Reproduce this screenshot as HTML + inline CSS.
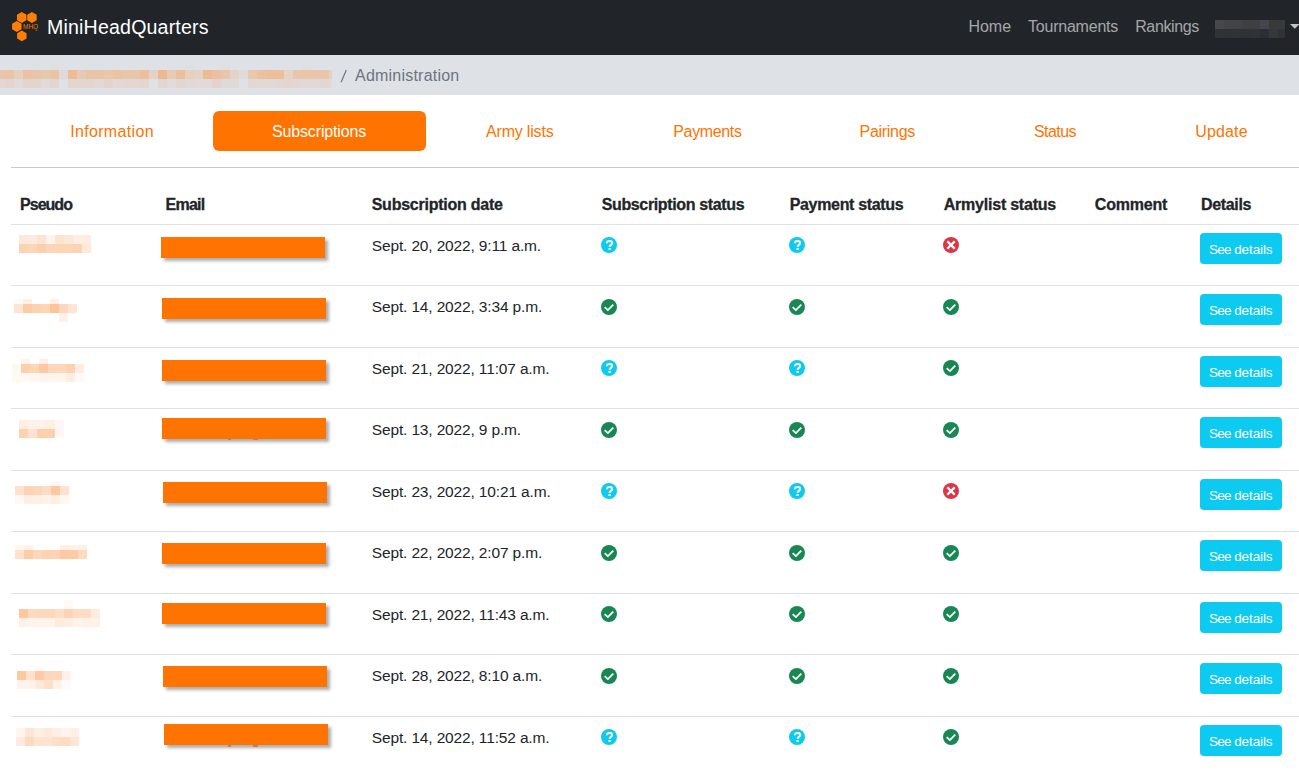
<!DOCTYPE html>
<html><head><meta charset="utf-8"><style>
*{box-sizing:border-box;margin:0;padding:0}
html,body{width:1299px;height:772px;overflow:hidden;background:#fff;font-family:"Liberation Sans",sans-serif;color:#212529}
.abs{position:absolute;white-space:nowrap}
.nav{position:absolute;left:0;top:0;width:1299px;height:55px;background:#212529}
.brand{position:absolute;left:47px;top:15px;font-size:19.6px;line-height:24px;color:#fff;letter-spacing:0.1px}
.nl{position:absolute;top:17.2px;font-size:16px;line-height:20px;color:rgba(255,255,255,.6)}
.bc{position:absolute;left:0;top:55px;width:1299px;height:40px;background:#dee1e6}
.bct{position:absolute;top:66px;font-size:16px;line-height:20px;color:#6c757d}
.tab{position:absolute;top:122px;font-size:16px;line-height:20px;color:#ff7300}
.pill{position:absolute;left:213px;top:111px;width:213px;height:40px;background:#ff7300;border-radius:6px}
.tabline{position:absolute;left:11px;top:167px;width:1288px;height:1px;background:#c8c9ca}
.th{position:absolute;top:195px;font-size:16px;line-height:20px;font-weight:bold;color:#212529;-webkit-text-stroke:0.3px #212529}
.rowline{position:absolute;left:11px;width:1288px;height:1px;background:#dee2e6}
.em{position:absolute;width:164px;height:21px;background:#ff7300;box-shadow:3px 3px 3px rgba(20,30,40,.36)}
.pb{position:absolute;width:9px}
.date{position:absolute;left:371.8px;font-size:15.5px;line-height:20px;letter-spacing:-0.15px;color:#212529;white-space:nowrap}
.ic{position:absolute}
.btn{position:absolute;left:1200px;width:82px;height:31px;background:#0dcaf0;border-radius:4px}
.btn span{position:absolute;top:7.6px;font-size:13.5px;line-height:18px;color:#fff;white-space:nowrap}
</style></head><body>
<div class="nav">
<svg style="position:absolute;left:0;top:0" width="45" height="50" viewBox="0 0 45 50"><g fill="#ff8000"><path d="M21.70 12.05 L26.42 14.78 L26.42 20.23 L21.70 22.95 L16.98 20.23 L16.98 14.77 Z"/><path d="M31.95 12.05 L36.67 14.78 L36.67 20.23 L31.95 22.95 L27.23 20.23 L27.23 14.77 Z"/><path d="M16.80 21.05 L21.52 23.77 L21.52 29.23 L16.80 31.95 L12.08 29.23 L12.08 23.77 Z"/><path d="M21.85 30.45 L26.57 33.17 L26.57 38.62 L21.85 41.35 L17.13 38.62 L17.13 33.17 Z"/></g>
<text x="23" y="29.3" font-family="Liberation Sans" font-size="7" fill="#f07800" textLength="15.2" lengthAdjust="spacingAndGlyphs">MHQ</text></svg>
<div class="brand" style="letter-spacing:0.17px">MiniHeadQuarters</div>
<div class="nl" style="left:968.4px;letter-spacing:0px">Home</div>
<div class="nl" style="left:1028px;letter-spacing:-0.22px">Tournaments</div>
<div class="nl" style="left:1135.2px;letter-spacing:-0.38px">Rankings</div>
<div style="position:absolute;left:1215px;top:20px;width:9px;height:9px;background:#48484c"></div><div style="position:absolute;left:1215px;top:29px;width:9px;height:9px;background:#303336"></div><div style="position:absolute;left:1224px;top:20px;width:9px;height:9px;background:#434346"></div><div style="position:absolute;left:1224px;top:29px;width:9px;height:9px;background:#2f3235"></div><div style="position:absolute;left:1233px;top:20px;width:9px;height:9px;background:#404446"></div><div style="position:absolute;left:1233px;top:29px;width:9px;height:9px;background:#2f3335"></div><div style="position:absolute;left:1242px;top:20px;width:9px;height:9px;background:#3e4044"></div><div style="position:absolute;left:1242px;top:29px;width:9px;height:9px;background:#2e3234"></div><div style="position:absolute;left:1251px;top:20px;width:9px;height:9px;background:#3e4044"></div><div style="position:absolute;left:1251px;top:29px;width:9px;height:9px;background:#2f3335"></div><div style="position:absolute;left:1260px;top:20px;width:9px;height:9px;background:#44464e"></div><div style="position:absolute;left:1260px;top:29px;width:9px;height:9px;background:#2b2e36"></div><div style="position:absolute;left:1269px;top:20px;width:9px;height:9px;background:#363a39"></div><div style="position:absolute;left:1269px;top:29px;width:9px;height:9px;background:#35383a"></div><div style="position:absolute;left:1278px;top:20px;width:7px;height:9px;background:#3a3a3d"></div><div style="position:absolute;left:1278px;top:29px;width:7px;height:9px;background:#323133"></div>
<svg style="position:absolute;left:1290.3px;top:24px" width="10" height="6" viewBox="0 0 10 6"><path d="M0 0 H9.6 L4.8 4.8 Z" fill="#c4c4c4"/></svg>
</div>
<div class="bc"></div>
<div style="position:absolute;left:0px;top:70px;width:5px;height:9px;background:#e8c5ae"></div><div style="position:absolute;left:0px;top:79px;width:5px;height:9px;background:#e2d7d2"></div><div style="position:absolute;left:5px;top:70px;width:9px;height:9px;background:#eac4a6"></div><div style="position:absolute;left:5px;top:79px;width:9px;height:9px;background:#e2d5cf"></div><div style="position:absolute;left:14px;top:70px;width:9px;height:9px;background:#e5cfbd"></div><div style="position:absolute;left:14px;top:79px;width:9px;height:9px;background:#e2dad8"></div><div style="position:absolute;left:23px;top:70px;width:9px;height:9px;background:#eac2a3"></div><div style="position:absolute;left:23px;top:79px;width:9px;height:9px;background:#e2d5cf"></div><div style="position:absolute;left:32px;top:70px;width:9px;height:9px;background:#e8c5a8"></div><div style="position:absolute;left:32px;top:79px;width:9px;height:9px;background:#e2d5ce"></div><div style="position:absolute;left:41px;top:70px;width:9px;height:9px;background:#e6c9ad"></div><div style="position:absolute;left:41px;top:79px;width:9px;height:9px;background:#e2dad8"></div><div style="position:absolute;left:50px;top:70px;width:9px;height:9px;background:#e9c4a4"></div><div style="position:absolute;left:50px;top:79px;width:9px;height:9px;background:#e2d4ce"></div><div style="position:absolute;left:50px;top:65px;width:9px;height:5px;background:#dfe0dd"></div><div style="position:absolute;left:59px;top:70px;width:9px;height:9px;background:#e2d8db"></div><div style="position:absolute;left:68px;top:70px;width:9px;height:9px;background:#ecbc96"></div><div style="position:absolute;left:68px;top:79px;width:9px;height:9px;background:#e2d6cf"></div><div style="position:absolute;left:77px;top:70px;width:9px;height:9px;background:#e8c9b3"></div><div style="position:absolute;left:77px;top:79px;width:9px;height:9px;background:#e2d6d0"></div><div style="position:absolute;left:86px;top:70px;width:9px;height:9px;background:#e9c4a5"></div><div style="position:absolute;left:86px;top:79px;width:9px;height:9px;background:#e2d6d0"></div><div style="position:absolute;left:95px;top:70px;width:9px;height:9px;background:#e9c4a7"></div><div style="position:absolute;left:95px;top:79px;width:9px;height:9px;background:#e2d9d6"></div><div style="position:absolute;left:104px;top:70px;width:9px;height:9px;background:#e7c8aa"></div><div style="position:absolute;left:104px;top:79px;width:9px;height:9px;background:#e4d3cd"></div><div style="position:absolute;left:113px;top:70px;width:9px;height:9px;background:#eac3a2"></div><div style="position:absolute;left:113px;top:79px;width:9px;height:9px;background:#e2d8d4"></div><div style="position:absolute;left:122px;top:70px;width:9px;height:9px;background:#e8c6a9"></div><div style="position:absolute;left:122px;top:79px;width:9px;height:9px;background:#e2d7d3"></div><div style="position:absolute;left:131px;top:70px;width:9px;height:9px;background:#e8c6a9"></div><div style="position:absolute;left:131px;top:79px;width:9px;height:9px;background:#e2d7d4"></div><div style="position:absolute;left:140px;top:70px;width:9px;height:9px;background:#ebbf9d"></div><div style="position:absolute;left:140px;top:79px;width:9px;height:9px;background:#e2d6d1"></div><div style="position:absolute;left:149px;top:70px;width:9px;height:9px;background:#e3d2c6"></div><div style="position:absolute;left:158px;top:70px;width:9px;height:9px;background:#edb88e"></div><div style="position:absolute;left:158px;top:79px;width:9px;height:9px;background:#e2d6d1"></div><div style="position:absolute;left:167px;top:70px;width:9px;height:9px;background:#e6ccb6"></div><div style="position:absolute;left:167px;top:79px;width:9px;height:9px;background:#e1dbd9"></div><div style="position:absolute;left:176px;top:70px;width:9px;height:9px;background:#ebbf9c"></div><div style="position:absolute;left:176px;top:79px;width:9px;height:9px;background:#e2d6d1"></div><div style="position:absolute;left:185px;top:70px;width:9px;height:9px;background:#e5d1bf"></div><div style="position:absolute;left:185px;top:79px;width:9px;height:9px;background:#e1d9d6"></div><div style="position:absolute;left:185px;top:65px;width:9px;height:5px;background:#dfdfe0"></div><div style="position:absolute;left:194px;top:70px;width:9px;height:9px;background:#e4d4c8"></div><div style="position:absolute;left:194px;top:79px;width:9px;height:9px;background:#e1dad8"></div><div style="position:absolute;left:203px;top:70px;width:9px;height:9px;background:#ecbb92"></div><div style="position:absolute;left:203px;top:79px;width:9px;height:9px;background:#e1dad8"></div><div style="position:absolute;left:212px;top:70px;width:9px;height:9px;background:#ebc0a0"></div><div style="position:absolute;left:212px;top:79px;width:9px;height:9px;background:#e4d3cd"></div><div style="position:absolute;left:221px;top:70px;width:9px;height:9px;background:#e8c6ad"></div><div style="position:absolute;left:221px;top:79px;width:9px;height:9px;background:#e1d9d6"></div><div style="position:absolute;left:221px;top:65px;width:9px;height:5px;background:#dfdfe0"></div><div style="position:absolute;left:230px;top:70px;width:9px;height:9px;background:#e4d2c6"></div><div style="position:absolute;left:230px;top:79px;width:9px;height:9px;background:#e1d9d6"></div><div style="position:absolute;left:239px;top:70px;width:9px;height:9px;background:#e1dad9"></div><div style="position:absolute;left:248px;top:70px;width:9px;height:9px;background:#e8c8af"></div><div style="position:absolute;left:248px;top:79px;width:9px;height:9px;background:#e2d7d1"></div><div style="position:absolute;left:257px;top:70px;width:9px;height:9px;background:#ebc19f"></div><div style="position:absolute;left:257px;top:79px;width:9px;height:9px;background:#e1d9d4"></div><div style="position:absolute;left:266px;top:70px;width:9px;height:9px;background:#ecbe9a"></div><div style="position:absolute;left:266px;top:79px;width:9px;height:9px;background:#e1d9d5"></div><div style="position:absolute;left:275px;top:70px;width:9px;height:9px;background:#ecbf9b"></div><div style="position:absolute;left:275px;top:79px;width:9px;height:9px;background:#e2d8d3"></div><div style="position:absolute;left:284px;top:70px;width:9px;height:9px;background:#e4d3c6"></div><div style="position:absolute;left:284px;top:79px;width:9px;height:9px;background:#e4d5ce"></div><div style="position:absolute;left:293px;top:70px;width:9px;height:9px;background:#e9c6aa"></div><div style="position:absolute;left:293px;top:79px;width:9px;height:9px;background:#e2d7d2"></div><div style="position:absolute;left:302px;top:70px;width:9px;height:9px;background:#e9c6aa"></div><div style="position:absolute;left:302px;top:79px;width:9px;height:9px;background:#e1d9d6"></div><div style="position:absolute;left:302px;top:65px;width:9px;height:5px;background:#dfdfe0"></div><div style="position:absolute;left:311px;top:70px;width:9px;height:9px;background:#e9c6ab"></div><div style="position:absolute;left:311px;top:79px;width:9px;height:9px;background:#e1d9d6"></div><div style="position:absolute;left:320px;top:70px;width:9px;height:9px;background:#e9c5aa"></div><div style="position:absolute;left:320px;top:79px;width:9px;height:9px;background:#e2d6d1"></div><div style="position:absolute;left:329px;top:70px;width:3px;height:9px;background:#e6cfc4"></div><div style="position:absolute;left:329px;top:79px;width:3px;height:9px;background:#e2d8d6"></div>
<svg style="position:absolute;left:336px;top:66px" width="16" height="20" viewBox="336 66 16 20"><path d="M341.1 82.3L346.3 70.1" stroke="#6c757d" stroke-width="1.15"/></svg>
<div class="bct" style="left:355px;letter-spacing:0.22px">Administration</div>
<div class="pill"></div>
<div class="tab" style="left:70.2px;letter-spacing:0.33px">Information</div>
<div class="tab" style="left:272px;color:#fff;letter-spacing:-0.15px">Subscriptions</div>
<div class="tab" style="left:486px;letter-spacing:-0.18px">Army lists</div>
<div class="tab" style="left:673.3px;letter-spacing:-0.36px">Payments</div>
<div class="tab" style="left:859.5px;letter-spacing:-0.28px">Pairings</div>
<div class="tab" style="left:1034px;letter-spacing:-0.55px">Status</div>
<div class="tab" style="left:1195.2px;letter-spacing:0.17px">Update</div>
<div class="tabline"></div>
<div class="th" style="left:20px;letter-spacing:-0.97px">Pseudo</div>
<div class="th" style="left:165.5px;letter-spacing:-0.74px">Email</div>
<div class="th" style="left:371.7px;letter-spacing:-0.24px">Subscription date</div>
<div class="th" style="left:601.7px;letter-spacing:-0.36px">Subscription status</div>
<div class="th" style="left:789.7px;letter-spacing:-0.33px">Payment status</div>
<div class="th" style="left:943.8px;letter-spacing:-0.23px">Armylist status</div>
<div class="th" style="left:1094.8px;letter-spacing:-0.19px">Comment</div>
<div class="th" style="left:1201px;letter-spacing:-0.34px">Details</div>
<div class="rowline" style="top:224px"></div>
<div class="em" style="left:161px;top:237px"></div>
<div class="pb" style="left:19px;top:235px;height:9px;background:#fde9dc"></div><div class="pb" style="left:28px;top:235px;height:9px;background:#fdeadd"></div><div class="pb" style="left:37px;top:235px;height:9px;background:#fce4d3"></div><div class="pb" style="left:46px;top:235px;height:9px;background:#fef4ee"></div><div class="pb" style="left:55px;top:235px;height:9px;background:#fde3d2"></div><div class="pb" style="left:64px;top:235px;height:9px;background:#fde8d8"></div><div class="pb" style="left:73px;top:235px;height:9px;background:#feede2"></div><div class="pb" style="left:82px;top:235px;height:9px;background:#feece2"></div><div class="pb" style="left:19px;top:244px;height:9px;background:#fdd3b2"></div><div class="pb" style="left:28px;top:244px;height:9px;background:#fdd6b8"></div><div class="pb" style="left:37px;top:244px;height:9px;background:#fccfac"></div><div class="pb" style="left:46px;top:244px;height:9px;background:#fdd6b9"></div><div class="pb" style="left:55px;top:244px;height:9px;background:#fdd5b4"></div><div class="pb" style="left:64px;top:244px;height:9px;background:#fdd6b6"></div><div class="pb" style="left:73px;top:244px;height:9px;background:#fdd3b5"></div><div class="pb" style="left:82px;top:244px;height:9px;background:#fee9db"></div>
<div class="date" style="top:235.6px">Sept. 20, 2022, 9:11 a.m.</div>
<svg class="ic" style="left:601.2px;top:237.0px" width="16" height="16" viewBox="0 0 16 16"><circle cx="8" cy="8" r="8" fill="#0dcaf0"/><path d="M5.9 6.3C5.9 4.7 7 3.9 8.55 3.9C10.1 3.9 11.15 4.8 11.15 6C11.15 7.15 10.4 7.6 9.6 8.1C8.9 8.55 8.65 8.9 8.65 9.9" stroke="#fff" stroke-width="2" fill="none"/><rect x="7.45" y="11" width="2.4" height="2.1" rx=".4" fill="#fff"/></svg>
<svg class="ic" style="left:789.2px;top:237.0px" width="16" height="16" viewBox="0 0 16 16"><circle cx="8" cy="8" r="8" fill="#0dcaf0"/><path d="M5.9 6.3C5.9 4.7 7 3.9 8.55 3.9C10.1 3.9 11.15 4.8 11.15 6C11.15 7.15 10.4 7.6 9.6 8.1C8.9 8.55 8.65 8.9 8.65 9.9" stroke="#fff" stroke-width="2" fill="none"/><rect x="7.45" y="11" width="2.4" height="2.1" rx=".4" fill="#fff"/></svg>
<svg class="ic" style="left:943.1px;top:237.0px" width="16" height="16" viewBox="0 0 16 16"><circle cx="8" cy="8" r="8" fill="#dc3545"/><path d="M5.1 5.1L10.9 10.9M10.9 5.1L5.1 10.9" stroke="#fff" stroke-width="2.3" stroke-linecap="square" fill="none"/></svg>
<div class="btn" style="top:233px"><span style="left:9px;letter-spacing:-0.75px">See</span><span style="left:34.2px;letter-spacing:-0.1px">details</span></div>
<div class="rowline" style="top:285px"></div>
<div class="em" style="left:162px;top:298px"></div>
<div class="pb" style="left:14px;top:299px;height:5px;background:#fffaf6"></div><div class="pb" style="left:23px;top:299px;height:5px;background:#fef0e6"></div><div class="pb" style="left:50px;top:299px;height:5px;background:#fef0e6"></div><div class="pb" style="left:14px;top:304px;height:9px;background:#fee5d3"></div><div class="pb" style="left:23px;top:304px;height:9px;background:#fdcba6"></div><div class="pb" style="left:32px;top:304px;height:9px;background:#fdd2b0"></div><div class="pb" style="left:41px;top:304px;height:9px;background:#fed6b3"></div><div class="pb" style="left:50px;top:304px;height:9px;background:#fdc39a"></div><div class="pb" style="left:59px;top:304px;height:9px;background:#fed8bd"></div><div class="pb" style="left:68px;top:304px;height:9px;background:#fee5d5"></div><div class="pb" style="left:59px;top:313px;height:9px;background:#fff1e8"></div>
<div class="date" style="top:297.1px">Sept. 14, 2022, 3:34 p.m.</div>
<svg class="ic" style="left:601.2px;top:299.0px" width="16" height="16" viewBox="0 0 16 16"><circle cx="8" cy="8" r="8" fill="#198754"/><path d="M3.7 8.1L6.9 11.1L12.3 5.7" stroke="#fff" stroke-width="1.8" fill="none"/></svg>
<svg class="ic" style="left:789.2px;top:299.0px" width="16" height="16" viewBox="0 0 16 16"><circle cx="8" cy="8" r="8" fill="#198754"/><path d="M3.7 8.1L6.9 11.1L12.3 5.7" stroke="#fff" stroke-width="1.8" fill="none"/></svg>
<svg class="ic" style="left:943.1px;top:299.0px" width="16" height="16" viewBox="0 0 16 16"><circle cx="8" cy="8" r="8" fill="#198754"/><path d="M3.7 8.1L6.9 11.1L12.3 5.7" stroke="#fff" stroke-width="1.8" fill="none"/></svg>
<div class="btn" style="top:294px"><span style="left:9px;letter-spacing:-0.75px">See</span><span style="left:34.2px;letter-spacing:-0.1px">details</span></div>
<div class="rowline" style="top:347px"></div>
<div class="em" style="left:162px;top:360px"></div>
<div class="pb" style="left:21px;top:359px;height:5px;background:#fff4ea"></div><div class="pb" style="left:39px;top:359px;height:5px;background:#ffefe4"></div><div class="pb" style="left:12px;top:364px;height:9px;background:#fff8f0"></div><div class="pb" style="left:21px;top:364px;height:9px;background:#fdcfad"></div><div class="pb" style="left:30px;top:364px;height:9px;background:#fdd6b6"></div><div class="pb" style="left:39px;top:364px;height:9px;background:#fdc8a3"></div><div class="pb" style="left:48px;top:364px;height:9px;background:#fed6b9"></div><div class="pb" style="left:57px;top:364px;height:9px;background:#fed7b9"></div><div class="pb" style="left:66px;top:364px;height:9px;background:#fdd2b2"></div><div class="pb" style="left:75px;top:364px;height:9px;background:#feece0"></div><div class="pb" style="left:12px;top:373px;height:9px;background:#fff8f3"></div><div class="pb" style="left:21px;top:373px;height:9px;background:#fff8f3"></div><div class="pb" style="left:30px;top:373px;height:9px;background:#fff6f0"></div><div class="pb" style="left:39px;top:373px;height:9px;background:#fff4ef"></div><div class="pb" style="left:48px;top:373px;height:9px;background:#fff6f0"></div><div class="pb" style="left:57px;top:373px;height:9px;background:#fff4ee"></div><div class="pb" style="left:66px;top:373px;height:9px;background:#feede0"></div><div class="pb" style="left:75px;top:373px;height:9px;background:#fffafa"></div>
<div class="date" style="top:358.6px">Sept. 21, 2022, 11:07 a.m.</div>
<svg class="ic" style="left:601.2px;top:360.0px" width="16" height="16" viewBox="0 0 16 16"><circle cx="8" cy="8" r="8" fill="#0dcaf0"/><path d="M5.9 6.3C5.9 4.7 7 3.9 8.55 3.9C10.1 3.9 11.15 4.8 11.15 6C11.15 7.15 10.4 7.6 9.6 8.1C8.9 8.55 8.65 8.9 8.65 9.9" stroke="#fff" stroke-width="2" fill="none"/><rect x="7.45" y="11" width="2.4" height="2.1" rx=".4" fill="#fff"/></svg>
<svg class="ic" style="left:789.2px;top:360.0px" width="16" height="16" viewBox="0 0 16 16"><circle cx="8" cy="8" r="8" fill="#0dcaf0"/><path d="M5.9 6.3C5.9 4.7 7 3.9 8.55 3.9C10.1 3.9 11.15 4.8 11.15 6C11.15 7.15 10.4 7.6 9.6 8.1C8.9 8.55 8.65 8.9 8.65 9.9" stroke="#fff" stroke-width="2" fill="none"/><rect x="7.45" y="11" width="2.4" height="2.1" rx=".4" fill="#fff"/></svg>
<svg class="ic" style="left:943.1px;top:360.0px" width="16" height="16" viewBox="0 0 16 16"><circle cx="8" cy="8" r="8" fill="#198754"/><path d="M3.7 8.1L6.9 11.1L12.3 5.7" stroke="#fff" stroke-width="1.8" fill="none"/></svg>
<div class="btn" style="top:356px"><span style="left:9px;letter-spacing:-0.75px">See</span><span style="left:34.2px;letter-spacing:-0.1px">details</span></div>
<div class="rowline" style="top:408px"></div>
<div class="em" style="left:162px;top:418px"></div>
<div class="pb" style="left:19px;top:420px;height:9px;background:#feede2"></div><div class="pb" style="left:28px;top:420px;height:9px;background:#fef1ea"></div><div class="pb" style="left:37px;top:420px;height:9px;background:#fff2ee"></div><div class="pb" style="left:46px;top:420px;height:9px;background:#fff0e0"></div><div class="pb" style="left:55px;top:420px;height:9px;background:#fff7f7"></div><div class="pb" style="left:19px;top:429px;height:9px;background:#fdd2b0"></div><div class="pb" style="left:28px;top:429px;height:9px;background:#fee1ce"></div><div class="pb" style="left:37px;top:429px;height:9px;background:#fdcfac"></div><div class="pb" style="left:46px;top:429px;height:9px;background:#fdd1ad"></div><div class="pb" style="left:55px;top:429px;height:9px;background:#fff6f6"></div>
<div style="position:absolute;left:228px;top:439px;width:3px;height:1px;background:#d4683c;opacity:.8"></div>
<div style="position:absolute;left:253px;top:439px;width:5px;height:1px;background:#d4683c;opacity:.8"></div>
<div class="date" style="top:420.1px">Sept. 13, 2022, 9 p.m.</div>
<svg class="ic" style="left:601.2px;top:422.0px" width="16" height="16" viewBox="0 0 16 16"><circle cx="8" cy="8" r="8" fill="#198754"/><path d="M3.7 8.1L6.9 11.1L12.3 5.7" stroke="#fff" stroke-width="1.8" fill="none"/></svg>
<svg class="ic" style="left:789.2px;top:422.0px" width="16" height="16" viewBox="0 0 16 16"><circle cx="8" cy="8" r="8" fill="#198754"/><path d="M3.7 8.1L6.9 11.1L12.3 5.7" stroke="#fff" stroke-width="1.8" fill="none"/></svg>
<svg class="ic" style="left:943.1px;top:422.0px" width="16" height="16" viewBox="0 0 16 16"><circle cx="8" cy="8" r="8" fill="#198754"/><path d="M3.7 8.1L6.9 11.1L12.3 5.7" stroke="#fff" stroke-width="1.8" fill="none"/></svg>
<div class="btn" style="top:417px"><span style="left:9px;letter-spacing:-0.75px">See</span><span style="left:34.2px;letter-spacing:-0.1px">details</span></div>
<div class="rowline" style="top:470px"></div>
<div class="em" style="left:163px;top:482px"></div>
<div class="pb" style="left:51px;top:481px;height:5px;background:#fff8f0"></div><div class="pb" style="left:15px;top:486px;height:9px;background:#fee2cd"></div><div class="pb" style="left:24px;top:486px;height:9px;background:#fdd3b4"></div><div class="pb" style="left:33px;top:486px;height:9px;background:#fdd5b8"></div><div class="pb" style="left:42px;top:486px;height:9px;background:#fddbc4"></div><div class="pb" style="left:51px;top:486px;height:9px;background:#fdc79f"></div><div class="pb" style="left:60px;top:486px;height:9px;background:#fee2cf"></div><div class="pb" style="left:15px;top:495px;height:9px;background:#fff8f3"></div><div class="pb" style="left:24px;top:495px;height:9px;background:#feefe4"></div><div class="pb" style="left:33px;top:495px;height:9px;background:#fef0e6"></div><div class="pb" style="left:42px;top:495px;height:9px;background:#fff2ea"></div><div class="pb" style="left:51px;top:495px;height:9px;background:#feefe3"></div><div class="pb" style="left:60px;top:495px;height:9px;background:#fff7f0"></div>
<div class="date" style="top:481.6px">Sept. 23, 2022, 10:21 a.m.</div>
<svg class="ic" style="left:601.2px;top:483.0px" width="16" height="16" viewBox="0 0 16 16"><circle cx="8" cy="8" r="8" fill="#0dcaf0"/><path d="M5.9 6.3C5.9 4.7 7 3.9 8.55 3.9C10.1 3.9 11.15 4.8 11.15 6C11.15 7.15 10.4 7.6 9.6 8.1C8.9 8.55 8.65 8.9 8.65 9.9" stroke="#fff" stroke-width="2" fill="none"/><rect x="7.45" y="11" width="2.4" height="2.1" rx=".4" fill="#fff"/></svg>
<svg class="ic" style="left:789.2px;top:483.0px" width="16" height="16" viewBox="0 0 16 16"><circle cx="8" cy="8" r="8" fill="#0dcaf0"/><path d="M5.9 6.3C5.9 4.7 7 3.9 8.55 3.9C10.1 3.9 11.15 4.8 11.15 6C11.15 7.15 10.4 7.6 9.6 8.1C8.9 8.55 8.65 8.9 8.65 9.9" stroke="#fff" stroke-width="2" fill="none"/><rect x="7.45" y="11" width="2.4" height="2.1" rx=".4" fill="#fff"/></svg>
<svg class="ic" style="left:943.1px;top:483.0px" width="16" height="16" viewBox="0 0 16 16"><circle cx="8" cy="8" r="8" fill="#dc3545"/><path d="M5.1 5.1L10.9 10.9M10.9 5.1L5.1 10.9" stroke="#fff" stroke-width="2.3" stroke-linecap="square" fill="none"/></svg>
<div class="btn" style="top:479px"><span style="left:9px;letter-spacing:-0.75px">See</span><span style="left:34.2px;letter-spacing:-0.1px">details</span></div>
<div class="rowline" style="top:531px"></div>
<div class="em" style="left:162px;top:543px"></div>
<div class="pb" style="left:15px;top:545px;height:5px;background:#fff6ed"></div><div class="pb" style="left:24px;top:545px;height:5px;background:#fff2ea"></div><div class="pb" style="left:60px;top:545px;height:5px;background:#fff0e6"></div><div class="pb" style="left:69px;top:545px;height:5px;background:#fff3ea"></div><div class="pb" style="left:78px;top:545px;height:5px;background:#fff0e6"></div><div class="pb" style="left:15px;top:550px;height:9px;background:#fee0cc"></div><div class="pb" style="left:24px;top:550px;height:9px;background:#fdcba6"></div><div class="pb" style="left:33px;top:550px;height:9px;background:#fed6ba"></div><div class="pb" style="left:42px;top:550px;height:9px;background:#fdd2b0"></div><div class="pb" style="left:51px;top:550px;height:9px;background:#fdd3b2"></div><div class="pb" style="left:60px;top:550px;height:9px;background:#fdc8a2"></div><div class="pb" style="left:69px;top:550px;height:9px;background:#fdcaa3"></div><div class="pb" style="left:78px;top:550px;height:9px;background:#fedabf"></div>
<div class="date" style="top:543.1px">Sept. 22, 2022, 2:07 p.m.</div>
<svg class="ic" style="left:601.2px;top:545.0px" width="16" height="16" viewBox="0 0 16 16"><circle cx="8" cy="8" r="8" fill="#198754"/><path d="M3.7 8.1L6.9 11.1L12.3 5.7" stroke="#fff" stroke-width="1.8" fill="none"/></svg>
<svg class="ic" style="left:789.2px;top:545.0px" width="16" height="16" viewBox="0 0 16 16"><circle cx="8" cy="8" r="8" fill="#198754"/><path d="M3.7 8.1L6.9 11.1L12.3 5.7" stroke="#fff" stroke-width="1.8" fill="none"/></svg>
<svg class="ic" style="left:943.1px;top:545.0px" width="16" height="16" viewBox="0 0 16 16"><circle cx="8" cy="8" r="8" fill="#198754"/><path d="M3.7 8.1L6.9 11.1L12.3 5.7" stroke="#fff" stroke-width="1.8" fill="none"/></svg>
<div class="btn" style="top:540px"><span style="left:9px;letter-spacing:-0.75px">See</span><span style="left:34.2px;letter-spacing:-0.1px">details</span></div>
<div class="rowline" style="top:593px"></div>
<div class="em" style="left:162px;top:603px"></div>
<div class="pb" style="left:64px;top:600px;height:9px;background:#fffaf5"></div><div class="pb" style="left:19px;top:609px;height:9px;background:#fdc89f"></div><div class="pb" style="left:28px;top:609px;height:9px;background:#fedbc0"></div><div class="pb" style="left:37px;top:609px;height:9px;background:#fed8bd"></div><div class="pb" style="left:46px;top:609px;height:9px;background:#fed8bd"></div><div class="pb" style="left:55px;top:609px;height:9px;background:#fedfc6"></div><div class="pb" style="left:64px;top:609px;height:9px;background:#fdd3b8"></div><div class="pb" style="left:73px;top:609px;height:9px;background:#fedcc3"></div><div class="pb" style="left:82px;top:609px;height:9px;background:#fedcc3"></div><div class="pb" style="left:91px;top:609px;height:9px;background:#feeddf"></div><div class="pb" style="left:19px;top:618px;height:9px;background:#fff0e6"></div><div class="pb" style="left:28px;top:618px;height:9px;background:#fff3ea"></div><div class="pb" style="left:37px;top:618px;height:9px;background:#fff4ec"></div><div class="pb" style="left:46px;top:618px;height:9px;background:#fff4ec"></div><div class="pb" style="left:55px;top:618px;height:9px;background:#feeadb"></div><div class="pb" style="left:64px;top:618px;height:9px;background:#ffede4"></div><div class="pb" style="left:73px;top:618px;height:9px;background:#fff3ea"></div><div class="pb" style="left:82px;top:618px;height:9px;background:#fff1e8"></div><div class="pb" style="left:91px;top:618px;height:9px;background:#fff1e8"></div>
<div class="date" style="top:604.6px">Sept. 21, 2022, 11:43 a.m.</div>
<svg class="ic" style="left:601.2px;top:606.0px" width="16" height="16" viewBox="0 0 16 16"><circle cx="8" cy="8" r="8" fill="#198754"/><path d="M3.7 8.1L6.9 11.1L12.3 5.7" stroke="#fff" stroke-width="1.8" fill="none"/></svg>
<svg class="ic" style="left:789.2px;top:606.0px" width="16" height="16" viewBox="0 0 16 16"><circle cx="8" cy="8" r="8" fill="#198754"/><path d="M3.7 8.1L6.9 11.1L12.3 5.7" stroke="#fff" stroke-width="1.8" fill="none"/></svg>
<svg class="ic" style="left:943.1px;top:606.0px" width="16" height="16" viewBox="0 0 16 16"><circle cx="8" cy="8" r="8" fill="#198754"/><path d="M3.7 8.1L6.9 11.1L12.3 5.7" stroke="#fff" stroke-width="1.8" fill="none"/></svg>
<div class="btn" style="top:602px"><span style="left:9px;letter-spacing:-0.75px">See</span><span style="left:34.2px;letter-spacing:-0.1px">details</span></div>
<div class="rowline" style="top:654px"></div>
<div class="em" style="left:163px;top:666px"></div>
<div class="pb" style="left:35px;top:666px;height:5px;background:#fffaf5"></div><div class="pb" style="left:17px;top:671px;height:9px;background:#fdc99f"></div><div class="pb" style="left:26px;top:671px;height:9px;background:#fee2cd"></div><div class="pb" style="left:35px;top:671px;height:9px;background:#fdc9a7"></div><div class="pb" style="left:44px;top:671px;height:9px;background:#fed6b9"></div><div class="pb" style="left:53px;top:671px;height:9px;background:#fed8bb"></div><div class="pb" style="left:62px;top:671px;height:9px;background:#fff0ee"></div><div class="pb" style="left:17px;top:680px;height:9px;background:#fff2e9"></div><div class="pb" style="left:26px;top:680px;height:9px;background:#fff2e9"></div><div class="pb" style="left:35px;top:680px;height:9px;background:#fee9dc"></div><div class="pb" style="left:44px;top:680px;height:9px;background:#fde0c8"></div><div class="pb" style="left:53px;top:680px;height:9px;background:#fff1e8"></div><div class="pb" style="left:62px;top:680px;height:9px;background:#fffbfb"></div>
<div class="date" style="top:666.1px">Sept. 28, 2022, 8:10 a.m.</div>
<svg class="ic" style="left:601.2px;top:668.0px" width="16" height="16" viewBox="0 0 16 16"><circle cx="8" cy="8" r="8" fill="#198754"/><path d="M3.7 8.1L6.9 11.1L12.3 5.7" stroke="#fff" stroke-width="1.8" fill="none"/></svg>
<svg class="ic" style="left:789.2px;top:668.0px" width="16" height="16" viewBox="0 0 16 16"><circle cx="8" cy="8" r="8" fill="#198754"/><path d="M3.7 8.1L6.9 11.1L12.3 5.7" stroke="#fff" stroke-width="1.8" fill="none"/></svg>
<svg class="ic" style="left:943.1px;top:668.0px" width="16" height="16" viewBox="0 0 16 16"><circle cx="8" cy="8" r="8" fill="#198754"/><path d="M3.7 8.1L6.9 11.1L12.3 5.7" stroke="#fff" stroke-width="1.8" fill="none"/></svg>
<div class="btn" style="top:663px"><span style="left:9px;letter-spacing:-0.75px">See</span><span style="left:34.2px;letter-spacing:-0.1px">details</span></div>
<div class="rowline" style="top:716px"></div>
<div class="em" style="left:164px;top:724px"></div>
<div class="pb" style="left:16px;top:728px;height:9px;background:#fff6ee"></div><div class="pb" style="left:25px;top:728px;height:9px;background:#fee6d4"></div><div class="pb" style="left:34px;top:728px;height:9px;background:#feefe4"></div><div class="pb" style="left:43px;top:728px;height:9px;background:#feeadd"></div><div class="pb" style="left:52px;top:728px;height:9px;background:#ffefe5"></div><div class="pb" style="left:61px;top:728px;height:9px;background:#fff3ef"></div><div class="pb" style="left:70px;top:728px;height:9px;background:#fff0e6"></div><div class="pb" style="left:16px;top:737px;height:9px;background:#feebdd"></div><div class="pb" style="left:25px;top:737px;height:9px;background:#fddbc0"></div><div class="pb" style="left:34px;top:737px;height:9px;background:#fee3cf"></div><div class="pb" style="left:43px;top:737px;height:9px;background:#fee3d1"></div><div class="pb" style="left:52px;top:737px;height:9px;background:#fedec6"></div><div class="pb" style="left:61px;top:737px;height:9px;background:#fedcc3"></div><div class="pb" style="left:70px;top:737px;height:9px;background:#fee5d6"></div>
<div style="position:absolute;left:228px;top:745px;width:3px;height:2px;background:#d4683c;opacity:.8"></div>
<div style="position:absolute;left:253px;top:745px;width:5px;height:2px;background:#d4683c;opacity:.8"></div>
<div class="date" style="top:727.6px">Sept. 14, 2022, 11:52 a.m.</div>
<svg class="ic" style="left:601.2px;top:729.0px" width="16" height="16" viewBox="0 0 16 16"><circle cx="8" cy="8" r="8" fill="#0dcaf0"/><path d="M5.9 6.3C5.9 4.7 7 3.9 8.55 3.9C10.1 3.9 11.15 4.8 11.15 6C11.15 7.15 10.4 7.6 9.6 8.1C8.9 8.55 8.65 8.9 8.65 9.9" stroke="#fff" stroke-width="2" fill="none"/><rect x="7.45" y="11" width="2.4" height="2.1" rx=".4" fill="#fff"/></svg>
<svg class="ic" style="left:789.2px;top:729.0px" width="16" height="16" viewBox="0 0 16 16"><circle cx="8" cy="8" r="8" fill="#0dcaf0"/><path d="M5.9 6.3C5.9 4.7 7 3.9 8.55 3.9C10.1 3.9 11.15 4.8 11.15 6C11.15 7.15 10.4 7.6 9.6 8.1C8.9 8.55 8.65 8.9 8.65 9.9" stroke="#fff" stroke-width="2" fill="none"/><rect x="7.45" y="11" width="2.4" height="2.1" rx=".4" fill="#fff"/></svg>
<svg class="ic" style="left:943.1px;top:729.0px" width="16" height="16" viewBox="0 0 16 16"><circle cx="8" cy="8" r="8" fill="#198754"/><path d="M3.7 8.1L6.9 11.1L12.3 5.7" stroke="#fff" stroke-width="1.8" fill="none"/></svg>
<div class="btn" style="top:725px"><span style="left:9px;letter-spacing:-0.75px">See</span><span style="left:34.2px;letter-spacing:-0.1px">details</span></div>
</body></html>
